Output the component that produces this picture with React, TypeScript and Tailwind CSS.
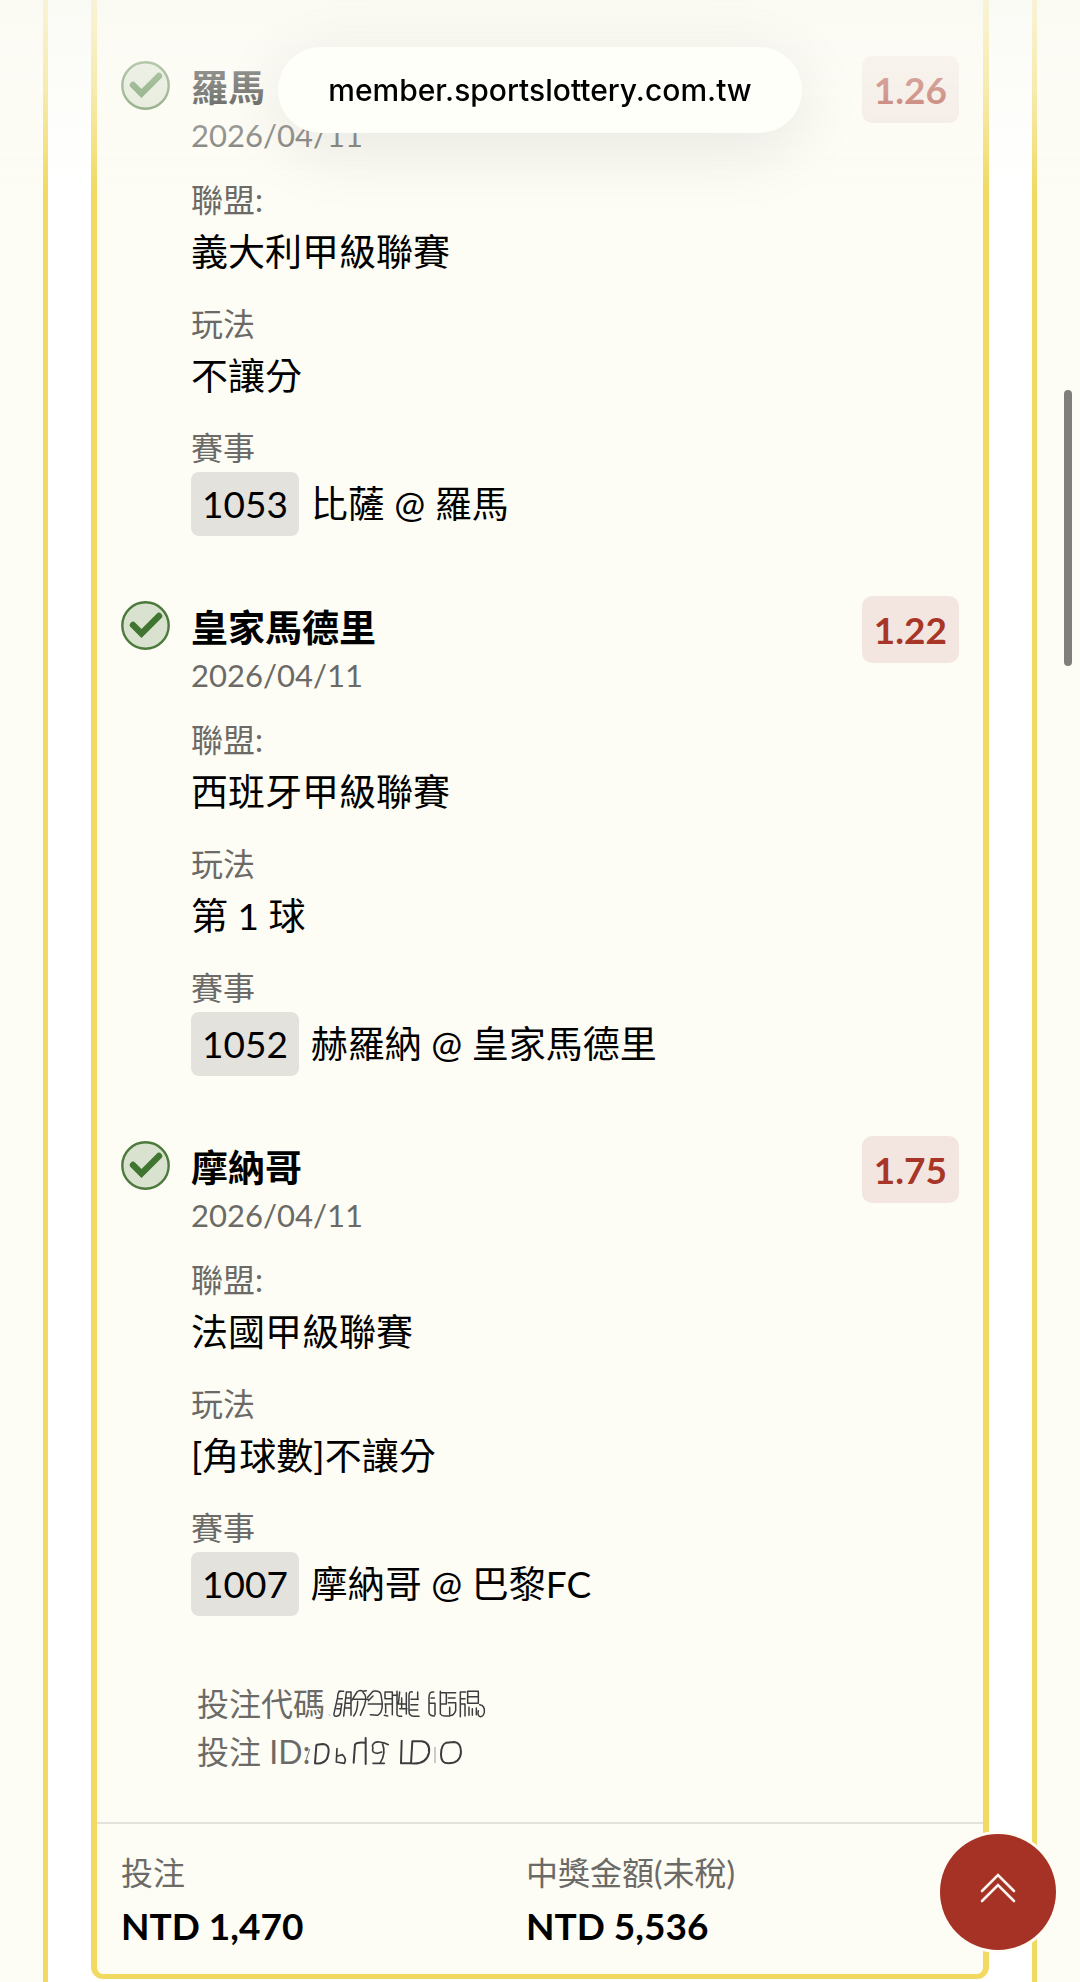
import type { ReactNode } from "react";

type Leg = {
  pick: string;
  date: string;
  odds: string;
  league: string;
  market: string;
  code: string;
  match: string;
};

const legs: Leg[] = [
  {
    pick: "羅馬",
    date: "2026/04/11",
    odds: "1.26",
    league: "義大利甲級聯賽",
    market: "不讓分",
    code: "1053",
    match: "比薩 @ 羅馬",
  },
  {
    pick: "皇家馬德里",
    date: "2026/04/11",
    odds: "1.22",
    league: "西班牙甲級聯賽",
    market: "第 1 球",
    code: "1052",
    match: "赫羅納 @ 皇家馬德里",
  },
  {
    pick: "摩納哥",
    date: "2026/04/11",
    odds: "1.75",
    league: "法國甲級聯賽",
    market: "[角球數]不讓分",
    code: "1007",
    match: "摩納哥 @ 巴黎FC",
  },
];

const totals = [
  { label: "投注", value: "NTD 1,470" },
  { label: "中獎金額(未稅)", value: "NTD 5,536" },
];

function WonIcon() {
  return (
    <svg viewBox="0 0 49 49" className="mt-[5px] w-[49px] h-[49px] shrink-0" role="img" aria-label="中獎">
      <circle cx="24.5" cy="24.5" r="23.2" fill="#d9e2ce" stroke="#4c7a3d" strokeWidth="2.4" />
      <path d="M12 24 L20.5 32.5 L38 15" fill="none" stroke="#3f7530" strokeWidth="6.4" strokeLinecap="round" />
    </svg>
  );
}

// Smudge that hides the code and the ID of the slip
function Smudge() {
  return (
    <svg
      viewBox="0 0 555 264"
      className="absolute left-52 top-1 w-[185px] h-[88px]"
      fill="none"
      stroke="#3c3c3e"
      strokeWidth="5"
      strokeLinecap="round"
      strokeLinejoin="round"
      aria-hidden="true"
    >
      <g strokeWidth="4.5">
        <path d="M106 22 Q98 24 98 40 L88 84 Q84 96 92 97 Q102 98 106 88 L110 60" />
        <path d="M102 22 H116 M124 24 H138 V94 M124 24 L116 96 M122 42 H138 M120 58 H138 M118 72 H136" />
        <path d="M101 44 H112 M98 60 H110 M95 74 H106" />
        <path d="M140 50 L156 24 Q164 16 174 22 L184 20 M146 46 H190 M158 52 Q158 82 146 96 M174 26 Q188 34 178 66 L166 94" />
        <path d="M188 40 L204 22 Q224 18 228 32 L232 60 M190 60 H228 M232 58 Q232 88 218 94 L196 92 M204 36 L190 50" />
        <path d="M240 24 H262 V92 M240 26 V44 H262 M240 60 H262 M242 60 V86 M238 94 L248 96 M262 34 H276" />
        <path d="M276 22 V90 Q276 98 290 97 M284 24 L280 60 H302 M290 42 V72 M284 74 H306 M304 26 V90" />
        <path d="M322 24 Q312 20 312 36 V82 Q312 96 326 97 H342 M338 24 V44 M318 46 H340 M318 62 H338 M316 78 H338" />
        <path d="M386 24 Q372 22 372 40 V86 Q374 96 388 96 M374 58 H390 V92 M378 42 H388" />
        <path d="M406 22 V90 Q410 97 422 96 H434 M406 26 H424 V60 H406 M428 26 H452 M430 42 H450 M430 56 H452 V80 Q446 96 434 94 M434 70 V90" />
        <path d="M466 98 V24 H482 M466 44 H480 M466 60 H480 V96 M488 22 H520 V58 H488 Z M490 38 H518 M492 70 V94 M502 74 V94 M514 72 V92" />
        <path d="M524 62 Q540 64 538 84 Q536 98 526 98 Q516 96 520 80" />
        <path d="M72 92 L75 94" strokeWidth="3" stroke="#a5a5a5" />
      </g>
      <path d="M4 226 L14 196" strokeWidth="3" stroke="#777" />
      <path d="M34 184 L30 238 Q54 242 66 224 Q80 182 54 180 L36 182" strokeWidth="6" />
      <path d="M96 194 L94 234 L118 238 Q126 224 112 212 L98 216" />
      <path d="M146 236 L150 182 Q154 174 178 176 M182 162 V240" strokeWidth="6" />
      <path d="M202 186 Q206 172 224 174 Q240 176 250 182 M232 178 Q244 206 226 236 M204 190 Q198 208 218 208 L230 204 M204 238 H238" />
      <path d="M290 170 L288 238 H314 M322 172 L318 238 Q364 242 372 206 Q376 176 350 172 Z" strokeWidth="6" />
      <path d="M390 190 V236" strokeWidth="2.5" stroke="#888" />
      <path d="M424 176 Q408 182 408 212 Q408 238 430 238 Q466 238 468 204 Q468 176 448 174 Z" strokeWidth="6" />
    </svg>
  );
}

function Field({ label, children }: { label: string; children: ReactNode }) {
  return (
    <div>
      <dt className="text-[32px] leading-[48px] text-[#6b6a67]">{label}</dt>
      <dd className="text-[37px] leading-[56px]">{children}</dd>
    </div>
  );
}

function LegItem({ leg }: { leg: Leg }) {
  return (
    <li className="flex items-start">
      <WonIcon />
      <div className="ml-[21px] flex-1">
        <h2 className="pt-1 text-[37px] leading-[56px] font-bold">{leg.pick}</h2>
        <p className="text-[31px] leading-[38px] text-[#6b6a67]">{leg.date}</p>
        <dl className="mt-[22px] flex flex-col gap-5">
          <Field label="聯盟:">{leg.league}</Field>
          <Field label="玩法">{leg.market}</Field>
          <Field label="賽事">
            <span className="flex items-center gap-3">
              <span className="rounded-lg bg-[#e3e2dd] px-[11px] leading-[64px]">{leg.code}</span>
              {leg.match}
            </span>
          </Field>
        </dl>
      </div>
      <span className="rounded-[10px] bg-[#f3e6e0] px-3 text-[37px] leading-[67px] font-bold text-[#a83628]">
        {leg.odds}
      </span>
    </li>
  );
}

export default function App() {
  return (
    <div className="min-h-screen bg-[#fefdf5] px-[43px] text-black font-['Lato','Noto_Sans_CJK_TC',sans-serif]">
      <main className="min-h-screen border-x-[5px] border-[#f2da62] bg-white px-[43px] pb-[3px]">
        <section className="rounded-b-xl border-x-[6px] border-b-[5px] border-[#f2da62] bg-[#fefdf5]">
          <ul className="flex flex-col gap-[60px] px-6 pt-14 pb-16">
            {legs.map((leg) => (
              <LegItem key={leg.code} leg={leg} />
            ))}
          </ul>

          <div className="relative pb-[46px] pl-[100px] text-[32px] leading-[48px] text-[#6b6a67]">
            <p>投注代碼</p>
            <p>投注 ID:</p>
            <Smudge />
          </div>

          <dl className="grid grid-cols-[29fr_31fr] border-t-2 border-[#e3e2dc] px-6 pt-[25px] pb-5">
            {totals.map((t) => (
              <div key={t.label}>
                <dt className="text-[32px] leading-[48px] text-[#6b6a67]">{t.label}</dt>
                <dd className="pt-px text-[37px] leading-[56px] font-bold">{t.value}</dd>
              </div>
            ))}
          </dl>
        </section>
      </main>

      {/* Fade under the browser's address pill */}
      <div className="fixed inset-x-0 top-0 h-[190px] bg-gradient-to-b from-[#f9f9f3]/80 via-[#fbfbf5]/50 to-[#fefdf5]/0 pointer-events-none" />
      <header className="fixed inset-x-0 top-[47px] flex justify-center">
        <div className="rounded-full bg-[#fffffa] px-[50px] font-['Inter',sans-serif] text-[30px] leading-[86px] font-medium shadow-[0_16px_70px_rgba(0,0,0,0.09)]">
          member.sportslottery.com.tw
        </div>
      </header>

      <div className="fixed right-2 top-[390px] h-[276px] w-2 rounded-full bg-[#807f7b]" />

      <button
        type="button"
        aria-label="回到頂部"
        className="fixed right-6 bottom-8 flex h-[116px] w-[116px] items-center justify-center rounded-full bg-[#a63226] ring-3 ring-[#fefdf5]"
      >
        <svg viewBox="0 0 36 30" className="mb-2 h-[30px] w-9" fill="none" stroke="#fdf3ee" strokeWidth="2.6" strokeLinecap="round">
          <path d="M2 18 L18 2 L34 18 M2 28 L18 12 L34 28" />
        </svg>
      </button>
    </div>
  );
}
